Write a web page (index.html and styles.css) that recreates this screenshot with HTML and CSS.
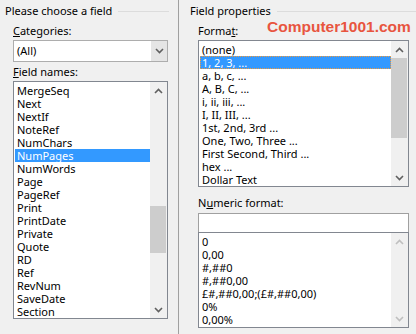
FILE: index.html
```html
<!DOCTYPE html>
<html lang="en">
<head>
    <meta charset="UTF-8">
    <title>Field</title>
    <link rel="stylesheet" href="styles.css">
</head>
<body>

    <div class="dialog">

        <!-- Coluna da esquerda -->
        <div class="pane left">
            <div class="group-title"><span>Please choose a field</span></div>

            <label class="caption"><u>C</u>ategories:</label>
            <div class="select">
                <span class="select-value">(All)</span>
                <span class="select-btn">
                    <svg width="9" height="6" viewBox="0 0 9 6"><polyline points="1,1 4.5,4.5 8,1" /></svg>
                </span>
            </div>

            <label class="caption names-caption"><u>F</u>ield names:</label>
            <div class="listbox names">
                <ul class="items">
                    <li>MergeSeq</li>
                    <li>Next</li>
                    <li>NextIf</li>
                    <li>NoteRef</li>
                    <li>NumChars</li>
                    <li class="selected">NumPages</li>
                    <li>NumWords</li>
                    <li>Page</li>
                    <li>PageRef</li>
                    <li>Print</li>
                    <li>PrintDate</li>
                    <li>Private</li>
                    <li>Quote</li>
                    <li>RD</li>
                    <li>Ref</li>
                    <li>RevNum</li>
                    <li>SaveDate</li>
                    <li>Section</li>
                </ul>
                <div class="scrollbar">
                    <span class="arrow"><svg width="9" height="6" viewBox="0 0 9 6"><polyline points="1,5 4.5,1.5 8,5" /></svg></span>
                    <div class="track"><div class="thumb names-thumb"></div></div>
                    <span class="arrow"><svg width="9" height="6" viewBox="0 0 9 6"><polyline points="1,1 4.5,4.5 8,1" /></svg></span>
                </div>
            </div>
        </div>

        <!-- Coluna da direita -->
        <div class="pane right">
            <div class="group-title"><span>Field properties</span></div>
            <div class="watermark">Computer1001.com</div>

            <label class="caption">Forma<u>t</u>:</label>
            <div class="listbox formats">
                <ul class="items">
                    <li>(none)</li>
                    <li class="selected focused">1, 2, 3, ...</li>
                    <li>a, b, c, ...</li>
                    <li>A, B, C, ...</li>
                    <li>i, ii, iii, ...</li>
                    <li>I, II, III, ...</li>
                    <li>1st, 2nd, 3rd ...</li>
                    <li>One, Two, Three ...</li>
                    <li>First Second, Third ...</li>
                    <li>hex ...</li>
                    <li>Dollar Text</li>
                </ul>
                <div class="scrollbar">
                    <span class="arrow"><svg width="9" height="6" viewBox="0 0 9 6"><polyline points="1,5 4.5,1.5 8,5" /></svg></span>
                    <div class="track"><div class="thumb formats-thumb"></div></div>
                    <span class="arrow"><svg width="9" height="6" viewBox="0 0 9 6"><polyline points="1,1 4.5,4.5 8,1" /></svg></span>
                </div>
            </div>

            <label class="caption numeric-caption">N<u>u</u>meric format:</label>
            <div class="textbox"></div>
            <div class="listbox numerics">
                <ul class="items">
                    <li>0</li>
                    <li>0,00</li>
                    <li>#,##0</li>
                    <li>#,##0,00</li>
                    <li>£#,##0,00;(£#,##0,00)</li>
                    <li>0%</li>
                    <li>0,00%</li>
                </ul>
                <div class="scrollbar disabled">
                    <span class="arrow"><svg width="9" height="6" viewBox="0 0 9 6"><polyline points="1,5 4.5,1.5 8,5" /></svg></span>
                    <div class="track"></div>
                    <span class="arrow"><svg width="9" height="6" viewBox="0 0 9 6"><polyline points="1,1 4.5,4.5 8,1" /></svg></span>
                </div>
            </div>
        </div>

    </div>

</body>
</html>
```

FILE: styles.css
```css
body {
    margin: 0;
    padding: 0;
    background-color: #f0f0f0;
    font-family: "Noto Sans", sans-serif;
    font-size: 11px;
    color: #000;
}
.dialog {
    display: flex;
    height: 334px;
}
.pane {
    display: flex;
    flex-direction: column;
    padding-top: 3px;
}
.pane.left {
    width: 179px;
    border-right: 1px solid #a0a0a0;
    padding-left: 13px;
    padding-right: 10px;
    box-sizing: border-box;
}
.pane.right {
    flex: 1;
    padding-left: 19px;
    padding-right: 7px;
    position: relative;
}
.group-title {
    display: flex;
    align-items: center;
    height: 16px;
    line-height: 16px;
    margin-left: -8px;
}
.group-title::after {
    content: "";
    flex: 1;
    height: 1px;
    background-color: #dcdcdc;
    margin-left: 6px;
}
.pane.left .group-title {
    margin-right: -1px;
}
.pane.right .group-title {
    margin-right: -7px;
}
.watermark {
    position: absolute;
    top: 18px;
    left: 88px;
    font-family: "Liberation Sans", Arial, sans-serif;
    font-weight: bold;
    font-size: 15.5px;
    color: #e8553f;
}
.caption {
    display: block;
    height: 16px;
    line-height: 16px;
    margin-top: 4px;
}
.caption u {
    text-decoration-thickness: 1px;
}
.names-caption {
    margin-top: 2px;
}
.select {
    display: flex;
    height: 22px;
    margin-top: 1px;
    border: 1px solid #adadad;
    background-color: white;
    box-sizing: border-box;
}
.select-value {
    flex: 1;
    line-height: 20px;
    padding-left: 3px;
}
.select-btn {
    width: 16px;
    background-color: #e5e5e5;
    display: flex;
    align-items: center;
    justify-content: center;
}
svg polyline {
    fill: none;
    stroke: #606060;
    stroke-width: 1.6;
}
.listbox {
    display: flex;
    border: 1px solid #828790;
    background-color: white;
    box-sizing: border-box;
    margin-top: 1px;
}
.names {
    height: 238px;
}
.formats {
    height: 147px;
}
.numerics {
    height: 96px;
    margin-top: 0;
}
.items {
    flex: 1;
    list-style: none;
    margin: 0;
    padding: 2px 0 0 1px;
    overflow: hidden;
}
.items li {
    height: 13px;
    line-height: 13px;
    padding-left: 2px;
    white-space: nowrap;
}
.items li.selected {
    background-color: #3399ff;
    color: white;
}
.items li.focused {
    outline: 1px dotted #f09a3c;
    outline-offset: -1px;
}
.scrollbar {
    width: 17px;
    display: flex;
    flex-direction: column;
    background-color: #f0f0f0;
}
.arrow {
    height: 17px;
    display: flex;
    align-items: center;
    justify-content: center;
}
.track {
    flex: 1;
}
.thumb {
    background-color: #cdcdcd;
    margin: 0 1px 0 0;
}
.names-thumb {
    margin-top: 107px;
    height: 47px;
}
.formats-thumb {
    margin-top: 0;
    height: 80px;
}
.scrollbar.disabled polyline {
    stroke: #bfbfbf;
}
.numeric-caption {
    margin-top: 8px;
}
.textbox {
    height: 19px;
    margin-top: 2px;
    border: 1px solid #a0a0a0;
    border-bottom: none;
    background-color: white;
    box-sizing: border-box;
}
```
